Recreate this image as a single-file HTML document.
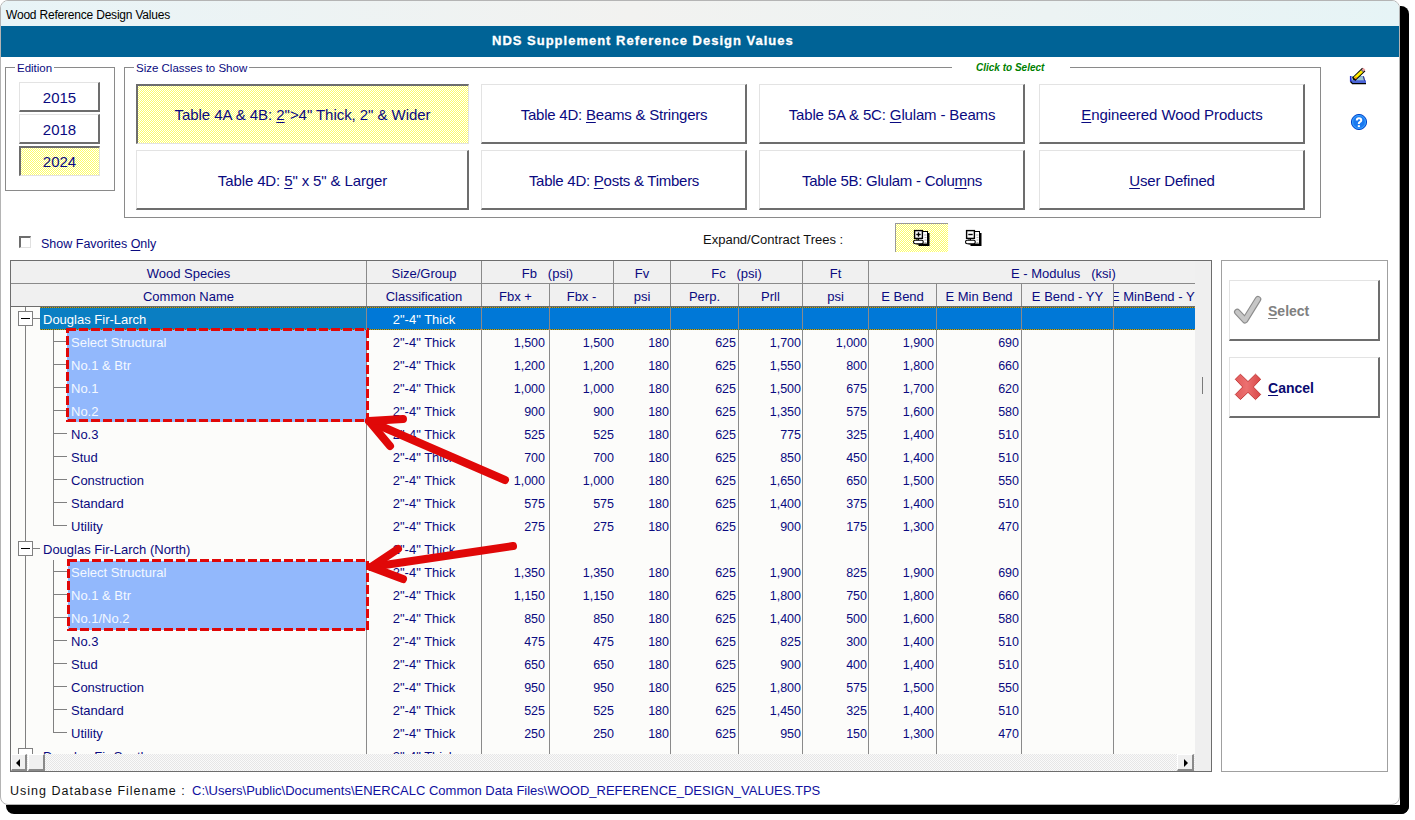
<!DOCTYPE html>
<html><head><meta charset="utf-8">
<style>
*{margin:0;padding:0;box-sizing:border-box}
html,body{width:1415px;height:820px;overflow:hidden;background:#fff}
body{position:relative;font-family:"Liberation Sans",sans-serif;color:#0a0a80}
.a{position:absolute}
.t{position:absolute;white-space:nowrap;line-height:1}
.btn{position:absolute;background:#fff;border-top:1px solid #e3e3e3;border-left:1px solid #e3e3e3;border-right:2px solid #6d6d6d;border-bottom:2px solid #6d6d6d}
.pressed{position:absolute;border-top:2px solid #6d6d6d;border-left:2px solid #6d6d6d;border-right:1px solid #e3e3e3;border-bottom:1px solid #e3e3e3;
 background-color:#fff;background-image:repeating-conic-gradient(#ffff66 0 25%,#ffffff 0 50%);background-size:2px 2px}
.yel{background-color:#fff;background-image:repeating-conic-gradient(#ffff66 0 25%,#ffffff 0 50%);background-size:2px 2px}
.bl{position:absolute;text-align:center;white-space:nowrap;line-height:1}
u{text-decoration:underline;text-underline-offset:2px;text-decoration-thickness:1px}
.hd{position:absolute;background:#f0f0f0;font-size:13px;text-align:center;white-space:nowrap;line-height:22px}
.vl{position:absolute;width:1px;background:#8a8a8a}
.hl{position:absolute;height:1px;background:#8a8a8a}
.gt{position:absolute;font-size:13px;white-space:nowrap;line-height:25px;height:23px}
.num{position:absolute;font-size:12.5px;white-space:nowrap;line-height:27px;height:23px;text-align:right}
</style></head><body>

<div class="a" style="left:1400px;top:6px;width:9px;height:808px;background:#000;border-radius:0 8px 8px 0"></div>
<div class="a" style="left:6px;top:805px;width:1403px;height:9px;background:#000;border-radius:0 0 8px 8px"></div>
<div class="a" style="left:0;top:0;width:1400px;height:805px;background:#fff;border:1px solid #b4b4b4;border-radius:8px;overflow:hidden">
<div class="a" style="left:0;top:0;width:1398px;height:25px;background:linear-gradient(90deg,#e8f4f7,#f2f2f0 45%,#ecf3f3 75%,#e6f4f6)"></div>
<div class="t" style="left:5px;top:8px;font-size:12px;letter-spacing:-0.2px;color:#000">Wood Reference Design Values</div>
<div class="a" style="left:0;top:25px;width:1398px;height:31px;background:#006396"></div>
</div>
<div class="t" style="left:492px;top:34px;font-size:13px;font-weight:bold;color:#fff;letter-spacing:1px;-webkit-text-stroke:0.3px #fff">NDS Supplement Reference Design Values</div>
<div class="a" style="left:5px;top:67px;width:110px;height:124px;border:1px solid #8a8a8a"></div>
<div class="t" style="left:15px;top:63px;font-size:11.5px;background:#fff;padding:0 2px">Edition</div>
<div class="btn" style="left:19px;top:82px;width:81px;height:30px"></div>
<div class="bl" style="left:19px;top:90px;width:81px;font-size:15px">2015</div>
<div class="btn" style="left:19px;top:114px;width:81px;height:30px"></div>
<div class="bl" style="left:19px;top:122px;width:81px;font-size:15px">2018</div>
<div class="pressed" style="left:19px;top:146px;width:81px;height:30px"></div>
<div class="bl" style="left:19px;top:154px;width:81px;font-size:15px">2024</div>
<div class="a" style="left:124px;top:67px;width:1197px;height:151px;border:1px solid #8a8a8a"></div>
<div class="t" style="left:134px;top:63px;font-size:11.5px;background:#fff;padding:0 2px">Size Classes to Show</div>
<div class="a" style="left:952px;top:62px;width:118px;height:10px;background:#fff"></div>
<div class="t" style="left:976px;top:63px;font-size:10px;font-weight:bold;font-style:italic;color:#008000">Click to Select</div>
<div class="pressed" style="left:136px;top:84px;width:333px;height:60px"></div>
<div class="bl" style="left:136px;top:107px;width:333px;font-size:15px;letter-spacing:-0.05px">Table 4A &amp; 4B: <u>2</u>"&gt;4" Thick, 2" &amp; Wider</div>
<div class="btn" style="left:481px;top:84px;width:266px;height:60px"></div>
<div class="bl" style="left:481px;top:107px;width:266px;font-size:15px;letter-spacing:-0.22px">Table 4D: <u>B</u>eams &amp; Stringers</div>
<div class="btn" style="left:759px;top:84px;width:266px;height:60px"></div>
<div class="bl" style="left:759px;top:107px;width:266px;font-size:15px;letter-spacing:-0.15px">Table 5A &amp; 5C: <u>G</u>lulam - Beams</div>
<div class="btn" style="left:1039px;top:84px;width:266px;height:60px"></div>
<div class="bl" style="left:1039px;top:107px;width:266px;font-size:15px;letter-spacing:-0.08px"><u>E</u>ngineered Wood Products</div>
<div class="btn" style="left:136px;top:150px;width:333px;height:60px"></div>
<div class="bl" style="left:136px;top:173px;width:333px;font-size:15px;letter-spacing:-0.12px">Table 4D: <u>5</u>" x 5" &amp; Larger</div>
<div class="btn" style="left:481px;top:150px;width:266px;height:60px"></div>
<div class="bl" style="left:481px;top:173px;width:266px;font-size:15px;letter-spacing:-0.26px">Table 4D: <u>P</u>osts &amp; Timbers</div>
<div class="btn" style="left:759px;top:150px;width:266px;height:60px"></div>
<div class="bl" style="left:759px;top:173px;width:266px;font-size:15px;letter-spacing:-0.25px">Table 5B: Glulam - Colu<u>m</u>ns</div>
<div class="btn" style="left:1039px;top:150px;width:266px;height:60px"></div>
<div class="bl" style="left:1039px;top:173px;width:266px;font-size:15px;letter-spacing:-0.17px"><u>U</u>ser Defined</div>
<svg class="a" style="left:1346px;top:64px" width="24" height="24" viewBox="0 0 24 24">
<path d="M4.5 12 L18 12 L18.5 16 L20 16.5 L20 19.5 L6.5 19.5 L4.5 17.5 Z" fill="#4a64d8"/>
<path d="M5 12.2 L17.5 12.2 L18 16.2 L6 16.2 Z" fill="#9cc4d0"/>
<path d="M4.5 12 L4.5 17.5" stroke="#2020e0" stroke-width="1.2"/>
<path d="M4.5 17.5 L6.5 19.6 L20 19.6" stroke="#000" stroke-width="1.2" fill="none"/>
<path d="M17.5 12.5 L18.5 16.5" stroke="#202080" stroke-width="1"/>
<path d="M7.6 15.3 L17.8 5.5" stroke="#000" stroke-width="4.6" stroke-linecap="butt"/>
<path d="M8.6 14.3 L16 7.2" stroke="#ffee00" stroke-width="2.8"/>
<path d="M9 14.8 L10.5 13.3" stroke="#f08020" stroke-width="1.5"/>
<path d="M16 7.2 L16.8 6.4" stroke="#a0a0a0" stroke-width="2.8"/>
<path d="M16.8 6.4 L18.4 4.8" stroke="#f0a0a0" stroke-width="2.8"/>
<path d="M7.3 15.6 L8 14.9" stroke="#000" stroke-width="1.5"/>
</svg>
<svg class="a" style="left:1347px;top:110px" width="24" height="24" viewBox="0 0 24 24">
<circle cx="12" cy="12" r="7.6" fill="#1a78f0" stroke="#0044cc" stroke-width="1"/>
<circle cx="12" cy="12" r="6.4" fill="none" stroke="#40a8ff" stroke-width="1"/>
<path d="M9.8 10.4 Q9.8 8.3 12 8.3 Q14.3 8.3 14.3 10.2 Q14.3 11.4 12.8 12.2 Q11.8 12.8 11.8 13.9" stroke="#fff" stroke-width="2" fill="none"/>
<rect x="10.8" y="15.2" width="2.1" height="1.9" fill="#fff"/>
</svg>
<div class="a" style="left:19px;top:236px;width:12px;height:12px;border-top:2px solid #6d6d6d;border-left:2px solid #6d6d6d;border-right:1px solid #e0e0e0;border-bottom:1px solid #e0e0e0"></div>
<div class="t" style="left:41px;top:238px;font-size:12.5px">Show Favorites <u>O</u>nly</div>
<div class="t" style="left:703px;top:233px;font-size:13px;color:#111">Expand/Contract Trees :</div>
<div class="a yel" style="left:895px;top:223px;width:53px;height:29px;border-top:1px solid #9a9a9a;border-left:1px solid #9a9a9a"></div>
<svg class="a" style="left:912px;top:229px" width="18" height="18" viewBox="0 0 18 18"><rect x="6.5" y="4" width="11" height="13" fill="#000"/><rect x="5" y="2.5" width="10.5" height="12.5" fill="#fff" stroke="#000" stroke-width="1"/><path d="M12 6h2.5M12.5 8.5h2M12.5 11h2M12.5 13.5h2" stroke="#b0b0b0" stroke-width="1"/><rect x="2.6" y="1.6" width="7.8" height="7.8" fill="#fff" stroke="#000" stroke-width="1.4"/><path d="M4.3 5.5h4.4" stroke="#000" stroke-width="1.4"/><path d="M6.5 3.3v4.4" stroke="#000" stroke-width="1.4"/><path d="M6.5 9.5v2" stroke="#000" stroke-width="1"/><rect x="1.5" y="11.3" width="9.8" height="3.4" rx="1.7" fill="#fff" stroke="#000" stroke-width="1.1"/></svg>
<svg class="a" style="left:964px;top:229px" width="18" height="18" viewBox="0 0 18 18"><rect x="6.5" y="4" width="11" height="13" fill="#000"/><rect x="5" y="2.5" width="10.5" height="12.5" fill="#fff" stroke="#000" stroke-width="1"/><path d="M12 6h2.5M12.5 8.5h2M12.5 11h2M12.5 13.5h2" stroke="#b0b0b0" stroke-width="1"/><rect x="2.6" y="1.6" width="7.8" height="7.8" fill="#fff" stroke="#000" stroke-width="1.4"/><path d="M4.3 5.5h4.4" stroke="#000" stroke-width="1.4"/><path d="M6.5 9.5v2" stroke="#000" stroke-width="1"/><rect x="1.5" y="11.3" width="9.8" height="3.4" rx="1.7" fill="#fff" stroke="#000" stroke-width="1.1"/></svg>
<div class="a" style="left:10px;top:260px;width:1202px;height:512px;border:1px solid #6d6d6d;background:#fcfcfa;overflow:hidden">
<div class="a" style="left:0px;top:0px;width:1184px;height:45px;background:#f0f0f0"></div>
<div class="a" style="left:1184px;top:0px;width:16px;height:510px;background:#efefef"></div>
<div class="a" style="left:1191px;top:116px;width:1px;height:17px;background:#7a7a7a"></div>
<div class="hl" style="left:0px;top:22px;width:1184px;height:1px;"></div>
<div class="hl" style="left:0px;top:45px;width:1184px;height:1px;background:#6d6d6d"></div>
<div class="t" style="left:0px;top:0px;width:355px;height:22px;text-align:center;font-size:13px;line-height:25px">Wood Species</div>
<div class="t" style="left:356px;top:0px;width:114px;height:22px;text-align:center;font-size:13px;line-height:25px">Size/Group</div>
<div class="t" style="left:471px;top:0px;width:131px;height:22px;text-align:center;font-size:13px;line-height:25px">Fb&nbsp;&nbsp;&nbsp;(psi)</div>
<div class="t" style="left:603px;top:0px;width:56px;height:22px;text-align:center;font-size:13px;line-height:25px">Fv</div>
<div class="t" style="left:660px;top:0px;width:131px;height:22px;text-align:center;font-size:13px;line-height:25px">Fc&nbsp;&nbsp;&nbsp;(psi)</div>
<div class="t" style="left:792px;top:0px;width:65px;height:22px;text-align:center;font-size:13px;line-height:25px">Ft</div>
<div class="t" style="left:1000px;top:0px;width:119px;height:22px;text-align:left;font-size:13px;line-height:25px">E - Modulus&nbsp;&nbsp;&nbsp;(ksi)</div>
<div class="t" style="left:0px;top:23px;width:355px;height:22px;text-align:center;font-size:13px;line-height:25px;overflow:hidden">Common Name</div>
<div class="t" style="left:356px;top:23px;width:114px;height:22px;text-align:center;font-size:13px;line-height:25px;overflow:hidden">Classification</div>
<div class="t" style="left:471px;top:23px;width:67px;height:22px;text-align:center;font-size:13px;line-height:25px;overflow:hidden">Fbx +</div>
<div class="t" style="left:539px;top:23px;width:63px;height:22px;text-align:center;font-size:13px;line-height:25px;overflow:hidden">Fbx -</div>
<div class="t" style="left:603px;top:23px;width:56px;height:22px;text-align:center;font-size:13px;line-height:25px;overflow:hidden">psi</div>
<div class="t" style="left:660px;top:23px;width:67px;height:22px;text-align:center;font-size:13px;line-height:25px;overflow:hidden">Perp.</div>
<div class="t" style="left:728px;top:23px;width:63px;height:22px;text-align:center;font-size:13px;line-height:25px;overflow:hidden">Prll</div>
<div class="t" style="left:792px;top:23px;width:65px;height:22px;text-align:center;font-size:13px;line-height:25px;overflow:hidden">psi</div>
<div class="t" style="left:858px;top:23px;width:67px;height:22px;text-align:center;font-size:13px;line-height:25px;overflow:hidden">E Bend</div>
<div class="t" style="left:926px;top:23px;width:84px;height:22px;text-align:center;font-size:13px;line-height:25px;overflow:hidden">E Min Bend</div>
<div class="t" style="left:1011px;top:23px;width:91px;height:22px;text-align:center;font-size:13px;line-height:25px;overflow:hidden">E Bend - YY</div>
<div class="t" style="left:1103px;top:23px;width:81px;height:22px;font-size:13px;line-height:25px;overflow:hidden"><span style="margin-left:-3px">E MinBend - YY</span></div>
<div class="a" style="left:1184px;top:0px;width:16px;height:46px;background:#efefef"></div>
<div class="vl" style="left:355px;top:0px;width:1px;height:45px;"></div>
<div class="vl" style="left:470px;top:0px;width:1px;height:45px;"></div>
<div class="vl" style="left:602px;top:0px;width:1px;height:45px;"></div>
<div class="vl" style="left:659px;top:0px;width:1px;height:45px;"></div>
<div class="vl" style="left:791px;top:0px;width:1px;height:45px;"></div>
<div class="vl" style="left:857px;top:0px;width:1px;height:45px;"></div>
<div class="vl" style="left:538px;top:23px;width:1px;height:22px;"></div>
<div class="vl" style="left:727px;top:23px;width:1px;height:22px;"></div>
<div class="vl" style="left:925px;top:23px;width:1px;height:22px;"></div>
<div class="vl" style="left:1010px;top:23px;width:1px;height:22px;"></div>
<div class="vl" style="left:1102px;top:23px;width:1px;height:22px;"></div>
<div class="a" style="left:29px;top:46px;width:326px;height:23px;background:#0a7ec2"></div>
<div class="a" style="left:356px;top:46px;width:828px;height:23px;background:#0078d7"></div>
<div class="a" style="left:29px;top:46px;width:1155px;height:1px;background:repeating-linear-gradient(90deg,#e08020 0 1px,#208040 1px 2px)"></div>
<div class="a" style="left:29px;top:68px;width:1155px;height:1px;background:repeating-linear-gradient(90deg,#e08020 0 1px,#208040 1px 2px)"></div>
<div class="a" style="left:56px;top:69px;width:300px;height:92px;background:#92b8fc"></div>
<div class="a" style="left:57px;top:300px;width:299px;height:69px;background:#92b8fc"></div>
<div class="vl" style="left:355px;top:46px;width:1px;height:447px;"></div>
<div class="vl" style="left:470px;top:46px;width:1px;height:447px;"></div>
<div class="vl" style="left:538px;top:46px;width:1px;height:447px;"></div>
<div class="vl" style="left:659px;top:46px;width:1px;height:447px;"></div>
<div class="vl" style="left:727px;top:46px;width:1px;height:447px;"></div>
<div class="vl" style="left:791px;top:46px;width:1px;height:447px;"></div>
<div class="vl" style="left:857px;top:46px;width:1px;height:447px;"></div>
<div class="vl" style="left:925px;top:46px;width:1px;height:447px;"></div>
<div class="vl" style="left:1010px;top:46px;width:1px;height:447px;"></div>
<div class="vl" style="left:1102px;top:46px;width:1px;height:447px;"></div>
<div class="vl" style="left:14px;top:46px;width:1px;height:447px;background:#808080"></div>
<div class="a" style="left:7px;top:50px;width:15px;height:15px;background:#fff;border:1px solid #808080"></div>
<div class="a" style="left:10px;top:57px;width:9px;height:1px;background:#000"></div>
<div class="a" style="left:22px;top:57px;width:7px;height:1px;background:#808080"></div>
<div class="gt" style="left:32px;top:46px;width:300px;height:23px;color:#fff">Douglas Fir-Larch</div>
<div class="gt" style="left:356px;top:46px;width:114px;height:23px;text-align:center;color:#fff">2"-4" Thick</div>
<div class="vl" style="left:42px;top:69px;width:1px;height:196px;background:#808080"></div>
<div class="hl" style="left:42px;top:80px;width:14px;height:1px;background:#808080"></div>
<div class="gt" style="left:60px;top:69px;width:290px;height:23px;color:#f4f8ff">Select Structural</div>
<div class="gt" style="left:356px;top:69px;width:114px;height:23px;text-align:center">2"-4" Thick</div>
<div class="num" style="left:474px;top:69px;width:60px;height:23px;">1,500</div>
<div class="num" style="left:543px;top:69px;width:60px;height:23px;">1,500</div>
<div class="num" style="left:598px;top:69px;width:60px;height:23px;">180</div>
<div class="num" style="left:665px;top:69px;width:60px;height:23px;">625</div>
<div class="num" style="left:730px;top:69px;width:60px;height:23px;">1,700</div>
<div class="num" style="left:796px;top:69px;width:60px;height:23px;">1,000</div>
<div class="num" style="left:863px;top:69px;width:60px;height:23px;">1,900</div>
<div class="num" style="left:948px;top:69px;width:60px;height:23px;">690</div>
<div class="hl" style="left:42px;top:103px;width:14px;height:1px;background:#808080"></div>
<div class="gt" style="left:60px;top:92px;width:290px;height:23px;color:#f4f8ff">No.1 &amp; Btr</div>
<div class="gt" style="left:356px;top:92px;width:114px;height:23px;text-align:center">2"-4" Thick</div>
<div class="num" style="left:474px;top:92px;width:60px;height:23px;">1,200</div>
<div class="num" style="left:543px;top:92px;width:60px;height:23px;">1,200</div>
<div class="num" style="left:598px;top:92px;width:60px;height:23px;">180</div>
<div class="num" style="left:665px;top:92px;width:60px;height:23px;">625</div>
<div class="num" style="left:730px;top:92px;width:60px;height:23px;">1,550</div>
<div class="num" style="left:796px;top:92px;width:60px;height:23px;">800</div>
<div class="num" style="left:863px;top:92px;width:60px;height:23px;">1,800</div>
<div class="num" style="left:948px;top:92px;width:60px;height:23px;">660</div>
<div class="hl" style="left:42px;top:126px;width:14px;height:1px;background:#808080"></div>
<div class="gt" style="left:60px;top:115px;width:290px;height:23px;color:#f4f8ff">No.1</div>
<div class="gt" style="left:356px;top:115px;width:114px;height:23px;text-align:center">2"-4" Thick</div>
<div class="num" style="left:474px;top:115px;width:60px;height:23px;">1,000</div>
<div class="num" style="left:543px;top:115px;width:60px;height:23px;">1,000</div>
<div class="num" style="left:598px;top:115px;width:60px;height:23px;">180</div>
<div class="num" style="left:665px;top:115px;width:60px;height:23px;">625</div>
<div class="num" style="left:730px;top:115px;width:60px;height:23px;">1,500</div>
<div class="num" style="left:796px;top:115px;width:60px;height:23px;">675</div>
<div class="num" style="left:863px;top:115px;width:60px;height:23px;">1,700</div>
<div class="num" style="left:948px;top:115px;width:60px;height:23px;">620</div>
<div class="hl" style="left:42px;top:149px;width:14px;height:1px;background:#808080"></div>
<div class="gt" style="left:60px;top:138px;width:290px;height:23px;color:#f4f8ff">No.2</div>
<div class="gt" style="left:356px;top:138px;width:114px;height:23px;text-align:center">2"-4" Thick</div>
<div class="num" style="left:474px;top:138px;width:60px;height:23px;">900</div>
<div class="num" style="left:543px;top:138px;width:60px;height:23px;">900</div>
<div class="num" style="left:598px;top:138px;width:60px;height:23px;">180</div>
<div class="num" style="left:665px;top:138px;width:60px;height:23px;">625</div>
<div class="num" style="left:730px;top:138px;width:60px;height:23px;">1,350</div>
<div class="num" style="left:796px;top:138px;width:60px;height:23px;">575</div>
<div class="num" style="left:863px;top:138px;width:60px;height:23px;">1,600</div>
<div class="num" style="left:948px;top:138px;width:60px;height:23px;">580</div>
<div class="hl" style="left:42px;top:172px;width:14px;height:1px;background:#808080"></div>
<div class="gt" style="left:60px;top:161px;width:290px;height:23px;color:#0a0a80">No.3</div>
<div class="gt" style="left:356px;top:161px;width:114px;height:23px;text-align:center">2"-4" Thick</div>
<div class="num" style="left:474px;top:161px;width:60px;height:23px;">525</div>
<div class="num" style="left:543px;top:161px;width:60px;height:23px;">525</div>
<div class="num" style="left:598px;top:161px;width:60px;height:23px;">180</div>
<div class="num" style="left:665px;top:161px;width:60px;height:23px;">625</div>
<div class="num" style="left:730px;top:161px;width:60px;height:23px;">775</div>
<div class="num" style="left:796px;top:161px;width:60px;height:23px;">325</div>
<div class="num" style="left:863px;top:161px;width:60px;height:23px;">1,400</div>
<div class="num" style="left:948px;top:161px;width:60px;height:23px;">510</div>
<div class="hl" style="left:42px;top:195px;width:14px;height:1px;background:#808080"></div>
<div class="gt" style="left:60px;top:184px;width:290px;height:23px;color:#0a0a80">Stud</div>
<div class="gt" style="left:356px;top:184px;width:114px;height:23px;text-align:center">2"-4" Thick</div>
<div class="num" style="left:474px;top:184px;width:60px;height:23px;">700</div>
<div class="num" style="left:543px;top:184px;width:60px;height:23px;">700</div>
<div class="num" style="left:598px;top:184px;width:60px;height:23px;">180</div>
<div class="num" style="left:665px;top:184px;width:60px;height:23px;">625</div>
<div class="num" style="left:730px;top:184px;width:60px;height:23px;">850</div>
<div class="num" style="left:796px;top:184px;width:60px;height:23px;">450</div>
<div class="num" style="left:863px;top:184px;width:60px;height:23px;">1,400</div>
<div class="num" style="left:948px;top:184px;width:60px;height:23px;">510</div>
<div class="hl" style="left:42px;top:218px;width:14px;height:1px;background:#808080"></div>
<div class="gt" style="left:60px;top:207px;width:290px;height:23px;color:#0a0a80">Construction</div>
<div class="gt" style="left:356px;top:207px;width:114px;height:23px;text-align:center">2"-4" Thick</div>
<div class="num" style="left:474px;top:207px;width:60px;height:23px;">1,000</div>
<div class="num" style="left:543px;top:207px;width:60px;height:23px;">1,000</div>
<div class="num" style="left:598px;top:207px;width:60px;height:23px;">180</div>
<div class="num" style="left:665px;top:207px;width:60px;height:23px;">625</div>
<div class="num" style="left:730px;top:207px;width:60px;height:23px;">1,650</div>
<div class="num" style="left:796px;top:207px;width:60px;height:23px;">650</div>
<div class="num" style="left:863px;top:207px;width:60px;height:23px;">1,500</div>
<div class="num" style="left:948px;top:207px;width:60px;height:23px;">550</div>
<div class="hl" style="left:42px;top:241px;width:14px;height:1px;background:#808080"></div>
<div class="gt" style="left:60px;top:230px;width:290px;height:23px;color:#0a0a80">Standard</div>
<div class="gt" style="left:356px;top:230px;width:114px;height:23px;text-align:center">2"-4" Thick</div>
<div class="num" style="left:474px;top:230px;width:60px;height:23px;">575</div>
<div class="num" style="left:543px;top:230px;width:60px;height:23px;">575</div>
<div class="num" style="left:598px;top:230px;width:60px;height:23px;">180</div>
<div class="num" style="left:665px;top:230px;width:60px;height:23px;">625</div>
<div class="num" style="left:730px;top:230px;width:60px;height:23px;">1,400</div>
<div class="num" style="left:796px;top:230px;width:60px;height:23px;">375</div>
<div class="num" style="left:863px;top:230px;width:60px;height:23px;">1,400</div>
<div class="num" style="left:948px;top:230px;width:60px;height:23px;">510</div>
<div class="hl" style="left:42px;top:264px;width:14px;height:1px;background:#808080"></div>
<div class="gt" style="left:60px;top:253px;width:290px;height:23px;color:#0a0a80">Utility</div>
<div class="gt" style="left:356px;top:253px;width:114px;height:23px;text-align:center">2"-4" Thick</div>
<div class="num" style="left:474px;top:253px;width:60px;height:23px;">275</div>
<div class="num" style="left:543px;top:253px;width:60px;height:23px;">275</div>
<div class="num" style="left:598px;top:253px;width:60px;height:23px;">180</div>
<div class="num" style="left:665px;top:253px;width:60px;height:23px;">625</div>
<div class="num" style="left:730px;top:253px;width:60px;height:23px;">900</div>
<div class="num" style="left:796px;top:253px;width:60px;height:23px;">175</div>
<div class="num" style="left:863px;top:253px;width:60px;height:23px;">1,300</div>
<div class="num" style="left:948px;top:253px;width:60px;height:23px;">470</div>
<div class="a" style="left:7px;top:280px;width:15px;height:15px;background:#fff;border:1px solid #808080"></div>
<div class="a" style="left:10px;top:287px;width:9px;height:1px;background:#000"></div>
<div class="a" style="left:22px;top:287px;width:7px;height:1px;background:#808080"></div>
<div class="gt" style="left:32px;top:276px;width:300px;height:23px;color:#0a0a80">Douglas Fir-Larch (North)</div>
<div class="gt" style="left:356px;top:276px;width:114px;height:23px;text-align:center;color:#0a0a80">2"-4" Thick</div>
<div class="vl" style="left:42px;top:299px;width:1px;height:173px;background:#808080"></div>
<div class="hl" style="left:42px;top:310px;width:14px;height:1px;background:#808080"></div>
<div class="gt" style="left:60px;top:299px;width:290px;height:23px;color:#f4f8ff">Select Structural</div>
<div class="gt" style="left:356px;top:299px;width:114px;height:23px;text-align:center">2"-4" Thick</div>
<div class="num" style="left:474px;top:299px;width:60px;height:23px;">1,350</div>
<div class="num" style="left:543px;top:299px;width:60px;height:23px;">1,350</div>
<div class="num" style="left:598px;top:299px;width:60px;height:23px;">180</div>
<div class="num" style="left:665px;top:299px;width:60px;height:23px;">625</div>
<div class="num" style="left:730px;top:299px;width:60px;height:23px;">1,900</div>
<div class="num" style="left:796px;top:299px;width:60px;height:23px;">825</div>
<div class="num" style="left:863px;top:299px;width:60px;height:23px;">1,900</div>
<div class="num" style="left:948px;top:299px;width:60px;height:23px;">690</div>
<div class="hl" style="left:42px;top:333px;width:14px;height:1px;background:#808080"></div>
<div class="gt" style="left:60px;top:322px;width:290px;height:23px;color:#f4f8ff">No.1 &amp; Btr</div>
<div class="gt" style="left:356px;top:322px;width:114px;height:23px;text-align:center">2"-4" Thick</div>
<div class="num" style="left:474px;top:322px;width:60px;height:23px;">1,150</div>
<div class="num" style="left:543px;top:322px;width:60px;height:23px;">1,150</div>
<div class="num" style="left:598px;top:322px;width:60px;height:23px;">180</div>
<div class="num" style="left:665px;top:322px;width:60px;height:23px;">625</div>
<div class="num" style="left:730px;top:322px;width:60px;height:23px;">1,800</div>
<div class="num" style="left:796px;top:322px;width:60px;height:23px;">750</div>
<div class="num" style="left:863px;top:322px;width:60px;height:23px;">1,800</div>
<div class="num" style="left:948px;top:322px;width:60px;height:23px;">660</div>
<div class="hl" style="left:42px;top:356px;width:14px;height:1px;background:#808080"></div>
<div class="gt" style="left:60px;top:345px;width:290px;height:23px;color:#f4f8ff">No.1/No.2</div>
<div class="gt" style="left:356px;top:345px;width:114px;height:23px;text-align:center">2"-4" Thick</div>
<div class="num" style="left:474px;top:345px;width:60px;height:23px;">850</div>
<div class="num" style="left:543px;top:345px;width:60px;height:23px;">850</div>
<div class="num" style="left:598px;top:345px;width:60px;height:23px;">180</div>
<div class="num" style="left:665px;top:345px;width:60px;height:23px;">625</div>
<div class="num" style="left:730px;top:345px;width:60px;height:23px;">1,400</div>
<div class="num" style="left:796px;top:345px;width:60px;height:23px;">500</div>
<div class="num" style="left:863px;top:345px;width:60px;height:23px;">1,600</div>
<div class="num" style="left:948px;top:345px;width:60px;height:23px;">580</div>
<div class="hl" style="left:42px;top:379px;width:14px;height:1px;background:#808080"></div>
<div class="gt" style="left:60px;top:368px;width:290px;height:23px;color:#0a0a80">No.3</div>
<div class="gt" style="left:356px;top:368px;width:114px;height:23px;text-align:center">2"-4" Thick</div>
<div class="num" style="left:474px;top:368px;width:60px;height:23px;">475</div>
<div class="num" style="left:543px;top:368px;width:60px;height:23px;">475</div>
<div class="num" style="left:598px;top:368px;width:60px;height:23px;">180</div>
<div class="num" style="left:665px;top:368px;width:60px;height:23px;">625</div>
<div class="num" style="left:730px;top:368px;width:60px;height:23px;">825</div>
<div class="num" style="left:796px;top:368px;width:60px;height:23px;">300</div>
<div class="num" style="left:863px;top:368px;width:60px;height:23px;">1,400</div>
<div class="num" style="left:948px;top:368px;width:60px;height:23px;">510</div>
<div class="hl" style="left:42px;top:402px;width:14px;height:1px;background:#808080"></div>
<div class="gt" style="left:60px;top:391px;width:290px;height:23px;color:#0a0a80">Stud</div>
<div class="gt" style="left:356px;top:391px;width:114px;height:23px;text-align:center">2"-4" Thick</div>
<div class="num" style="left:474px;top:391px;width:60px;height:23px;">650</div>
<div class="num" style="left:543px;top:391px;width:60px;height:23px;">650</div>
<div class="num" style="left:598px;top:391px;width:60px;height:23px;">180</div>
<div class="num" style="left:665px;top:391px;width:60px;height:23px;">625</div>
<div class="num" style="left:730px;top:391px;width:60px;height:23px;">900</div>
<div class="num" style="left:796px;top:391px;width:60px;height:23px;">400</div>
<div class="num" style="left:863px;top:391px;width:60px;height:23px;">1,400</div>
<div class="num" style="left:948px;top:391px;width:60px;height:23px;">510</div>
<div class="hl" style="left:42px;top:425px;width:14px;height:1px;background:#808080"></div>
<div class="gt" style="left:60px;top:414px;width:290px;height:23px;color:#0a0a80">Construction</div>
<div class="gt" style="left:356px;top:414px;width:114px;height:23px;text-align:center">2"-4" Thick</div>
<div class="num" style="left:474px;top:414px;width:60px;height:23px;">950</div>
<div class="num" style="left:543px;top:414px;width:60px;height:23px;">950</div>
<div class="num" style="left:598px;top:414px;width:60px;height:23px;">180</div>
<div class="num" style="left:665px;top:414px;width:60px;height:23px;">625</div>
<div class="num" style="left:730px;top:414px;width:60px;height:23px;">1,800</div>
<div class="num" style="left:796px;top:414px;width:60px;height:23px;">575</div>
<div class="num" style="left:863px;top:414px;width:60px;height:23px;">1,500</div>
<div class="num" style="left:948px;top:414px;width:60px;height:23px;">550</div>
<div class="hl" style="left:42px;top:448px;width:14px;height:1px;background:#808080"></div>
<div class="gt" style="left:60px;top:437px;width:290px;height:23px;color:#0a0a80">Standard</div>
<div class="gt" style="left:356px;top:437px;width:114px;height:23px;text-align:center">2"-4" Thick</div>
<div class="num" style="left:474px;top:437px;width:60px;height:23px;">525</div>
<div class="num" style="left:543px;top:437px;width:60px;height:23px;">525</div>
<div class="num" style="left:598px;top:437px;width:60px;height:23px;">180</div>
<div class="num" style="left:665px;top:437px;width:60px;height:23px;">625</div>
<div class="num" style="left:730px;top:437px;width:60px;height:23px;">1,450</div>
<div class="num" style="left:796px;top:437px;width:60px;height:23px;">325</div>
<div class="num" style="left:863px;top:437px;width:60px;height:23px;">1,400</div>
<div class="num" style="left:948px;top:437px;width:60px;height:23px;">510</div>
<div class="hl" style="left:42px;top:471px;width:14px;height:1px;background:#808080"></div>
<div class="gt" style="left:60px;top:460px;width:290px;height:23px;color:#0a0a80">Utility</div>
<div class="gt" style="left:356px;top:460px;width:114px;height:23px;text-align:center">2"-4" Thick</div>
<div class="num" style="left:474px;top:460px;width:60px;height:23px;">250</div>
<div class="num" style="left:543px;top:460px;width:60px;height:23px;">250</div>
<div class="num" style="left:598px;top:460px;width:60px;height:23px;">180</div>
<div class="num" style="left:665px;top:460px;width:60px;height:23px;">625</div>
<div class="num" style="left:730px;top:460px;width:60px;height:23px;">950</div>
<div class="num" style="left:796px;top:460px;width:60px;height:23px;">150</div>
<div class="num" style="left:863px;top:460px;width:60px;height:23px;">1,300</div>
<div class="num" style="left:948px;top:460px;width:60px;height:23px;">470</div>
<div class="a" style="left:7px;top:487px;width:15px;height:15px;background:#fff;border:1px solid #808080"></div>
<div class="gt" style="left:32px;top:483px;width:300px;height:23px;">Douglas Fir-South</div>
<div class="gt" style="left:356px;top:483px;width:114px;height:23px;text-align:center">2"-4" Thick</div>
<div class="a" style="left:0px;top:493px;width:1184px;height:17px;background-color:#f4f4f4;background-image:repeating-conic-gradient(#e6e6e6 0 25%,#fafafa 0 50%);background-size:2px 2px"></div>
<div class="a" style="left:0px;top:493px;width:16px;height:17px;background:#f0f0f0;border-right:2px solid #8a8a8a;border-bottom:2px solid #8a8a8a;border-top:1px solid #fff;border-left:1px solid #fff"></div>
<div class="a" style="left:5px;top:498px;width:0px;height:0px;border-top:4px solid transparent;border-bottom:4px solid transparent;border-right:4px solid #000"></div>
<div class="a" style="left:17px;top:493px;width:17px;height:17px;background:#f0f0f0;border-right:2px solid #8a8a8a;border-bottom:2px solid #8a8a8a;border-top:1px solid #fff;border-left:1px solid #fff"></div>
<div class="a" style="left:1166px;top:493px;width:17px;height:17px;background:#f0f0f0;border-right:2px solid #8a8a8a;border-bottom:2px solid #8a8a8a;border-top:1px solid #fff;border-left:1px solid #fff"></div>
<div class="a" style="left:1173px;top:498px;width:0px;height:0px;border-top:4px solid transparent;border-bottom:4px solid transparent;border-left:4px solid #000"></div>
<div class="a" style="left:1184px;top:493px;width:16px;height:17px;background:#efefef"></div>
</div>
<svg class="a" style="left:0;top:0" width="1415" height="820" viewBox="0 0 1415 820">
<rect x="67.5" y="329.5" width="300" height="91" fill="none" stroke="#e00808" stroke-width="3" stroke-dasharray="9 3" stroke-dashoffset="1" shape-rendering="crispEdges"/>
<rect x="68.5" y="560.5" width="299" height="69" fill="none" stroke="#e00808" stroke-width="3" stroke-dasharray="9 3" stroke-dashoffset="1" shape-rendering="crispEdges"/>
<g stroke="#e00808" stroke-width="8" stroke-linecap="round" stroke-linejoin="round" fill="none">
<path d="M505 480 L369 421"/>
<path d="M403 419 L369 421 L390 446"/>
<path d="M513 546 L371 567"/>
<path d="M398 549 L371 567 L403 579"/>
</g>
</svg>
<div class="a" style="left:1221px;top:260px;width:167px;height:512px;border:1px solid #a0a0a0"></div>
<div class="btn" style="left:1229px;top:280px;width:151px;height:61px"></div>
<div class="btn" style="left:1229px;top:357px;width:151px;height:61px"></div>
<svg class="a" style="left:1228px;top:290px" width="40" height="40" viewBox="0 0 40 40">
<path d="M9.3 22 L17 30.2 L30 9.2" stroke="#8c8c8c" stroke-width="6.6" stroke-linecap="round" stroke-linejoin="round" fill="none"/>
<path d="M9.3 22 L17 30.2 L30 9.2" stroke="#c6c6c6" stroke-width="4.4" stroke-linecap="round" stroke-linejoin="round" fill="none"/>
</svg>
<div class="t" style="left:1268px;top:304px;font-size:14px;font-weight:bold;color:#808080"><u>S</u>elect</div>
<svg class="a" style="left:1228px;top:367px" width="40" height="40" viewBox="0 0 40 40">
<defs><linearGradient id="xg" x1="0" y1="0" x2="1" y2="0"><stop offset="0" stop-color="#e25c5c"/><stop offset="0.45" stop-color="#ec7070"/><stop offset="1" stop-color="#d84848"/></linearGradient></defs>
<path d="M7.3 12.3 L12.4 7.2 L20 14.6 L27.5 7.2 L32.7 12.3 L25.3 20 L32.7 27.5 L27.5 32.6 L20 25.3 L12.4 32.6 L7.3 27.5 L14.7 20 Z" fill="url(#xg)" stroke="#c43a3a" stroke-width="1" stroke-linejoin="round"/>
</svg>
<div class="t" style="left:1268px;top:381px;font-size:14px;font-weight:bold;color:#0a0a70"><u>C</u>ancel</div>
<div class="t" style="left:10px;top:785px;font-size:12.5px;color:#111;letter-spacing:1px">Using Database Filename :</div>
<div class="t" style="left:192px;top:784px;font-size:13px;color:#1010a0">C:\Users\Public\Documents\ENERCALC Common Data Files\WOOD_REFERENCE_DESIGN_VALUES.TPS</div>
</body></html>
